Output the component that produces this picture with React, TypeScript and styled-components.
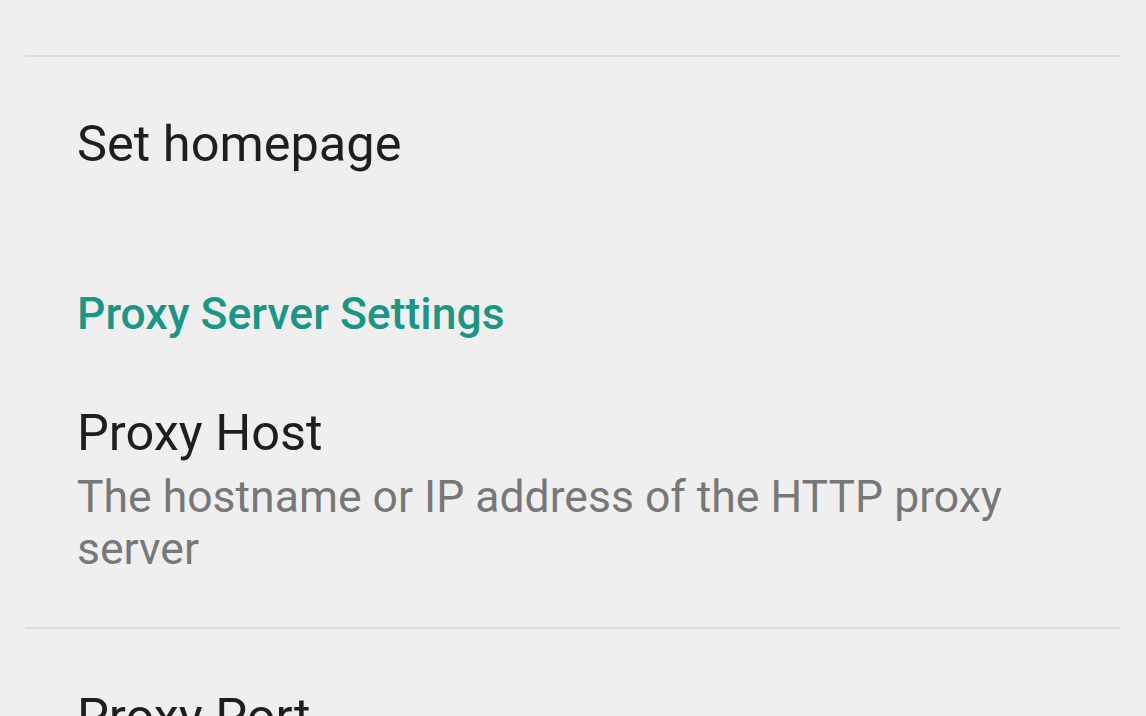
import React from 'react';
import styled, { createGlobalStyle } from 'styled-components';

const GlobalStyle = createGlobalStyle`
  html, body {
    margin: 0;
    padding: 0;
    background: #efefef;
    font-family: Roboto, "Noto Sans", sans-serif;
    overflow: hidden;
  }
`;

const Screen = styled.div`
  width: 1146px;
  height: 716px;
  background: #efefef;
  overflow: hidden;
  display: flex;
  flex-direction: column;
`;

// bottom part of the item scrolled above the viewport
const PrevTail = styled.div`
  height: 55px;
  flex-shrink: 0;
`;

const Divider = styled.div`
  height: 2px;
  flex-shrink: 0;
  margin: 0 26px 0 25px;
  background: #dcdcdc;
`;

const Item = styled.div<{ $top: number; $bottom: number }>`
  flex-shrink: 0;
  padding: ${(p) => p.$top}px 40px ${(p) => p.$bottom}px 77px;
  display: flex;
  flex-direction: column;
`;

const Title = styled.div`
  font-size: 50.5px;
  line-height: 60px;
  color: #1e1e1e;
  white-space: nowrap;
`;

const Summary = styled.div`
  margin-top: 8px;
  font-size: 44.5px;
  line-height: 52px;
  color: #777777;
`;

const Category = styled.div`
  flex-shrink: 0;
  padding: 114px 0 0 77px;
  font-size: 44.5px;
  line-height: 52px;
  font-weight: 500;
  color: #1b9586;
`;

export default function App() {
  return (
    <>
      <GlobalStyle />
      <Screen>
        <PrevTail />
        <Divider />
        <Item $top={57} $bottom={0}>
          <Title>Set homepage</Title>
        </Item>
        <Category>Proxy Server Settings</Category>
        <Item $top={63} $bottom={52}>
          <Title>Proxy Host</Title>
          <Summary>The hostname or IP address of the HTTP proxy server</Summary>
        </Item>
        <Divider />
        <Item $top={58} $bottom={0}>
          <Title>Proxy Port</Title>
        </Item>
      </Screen>
    </>
  );
}
